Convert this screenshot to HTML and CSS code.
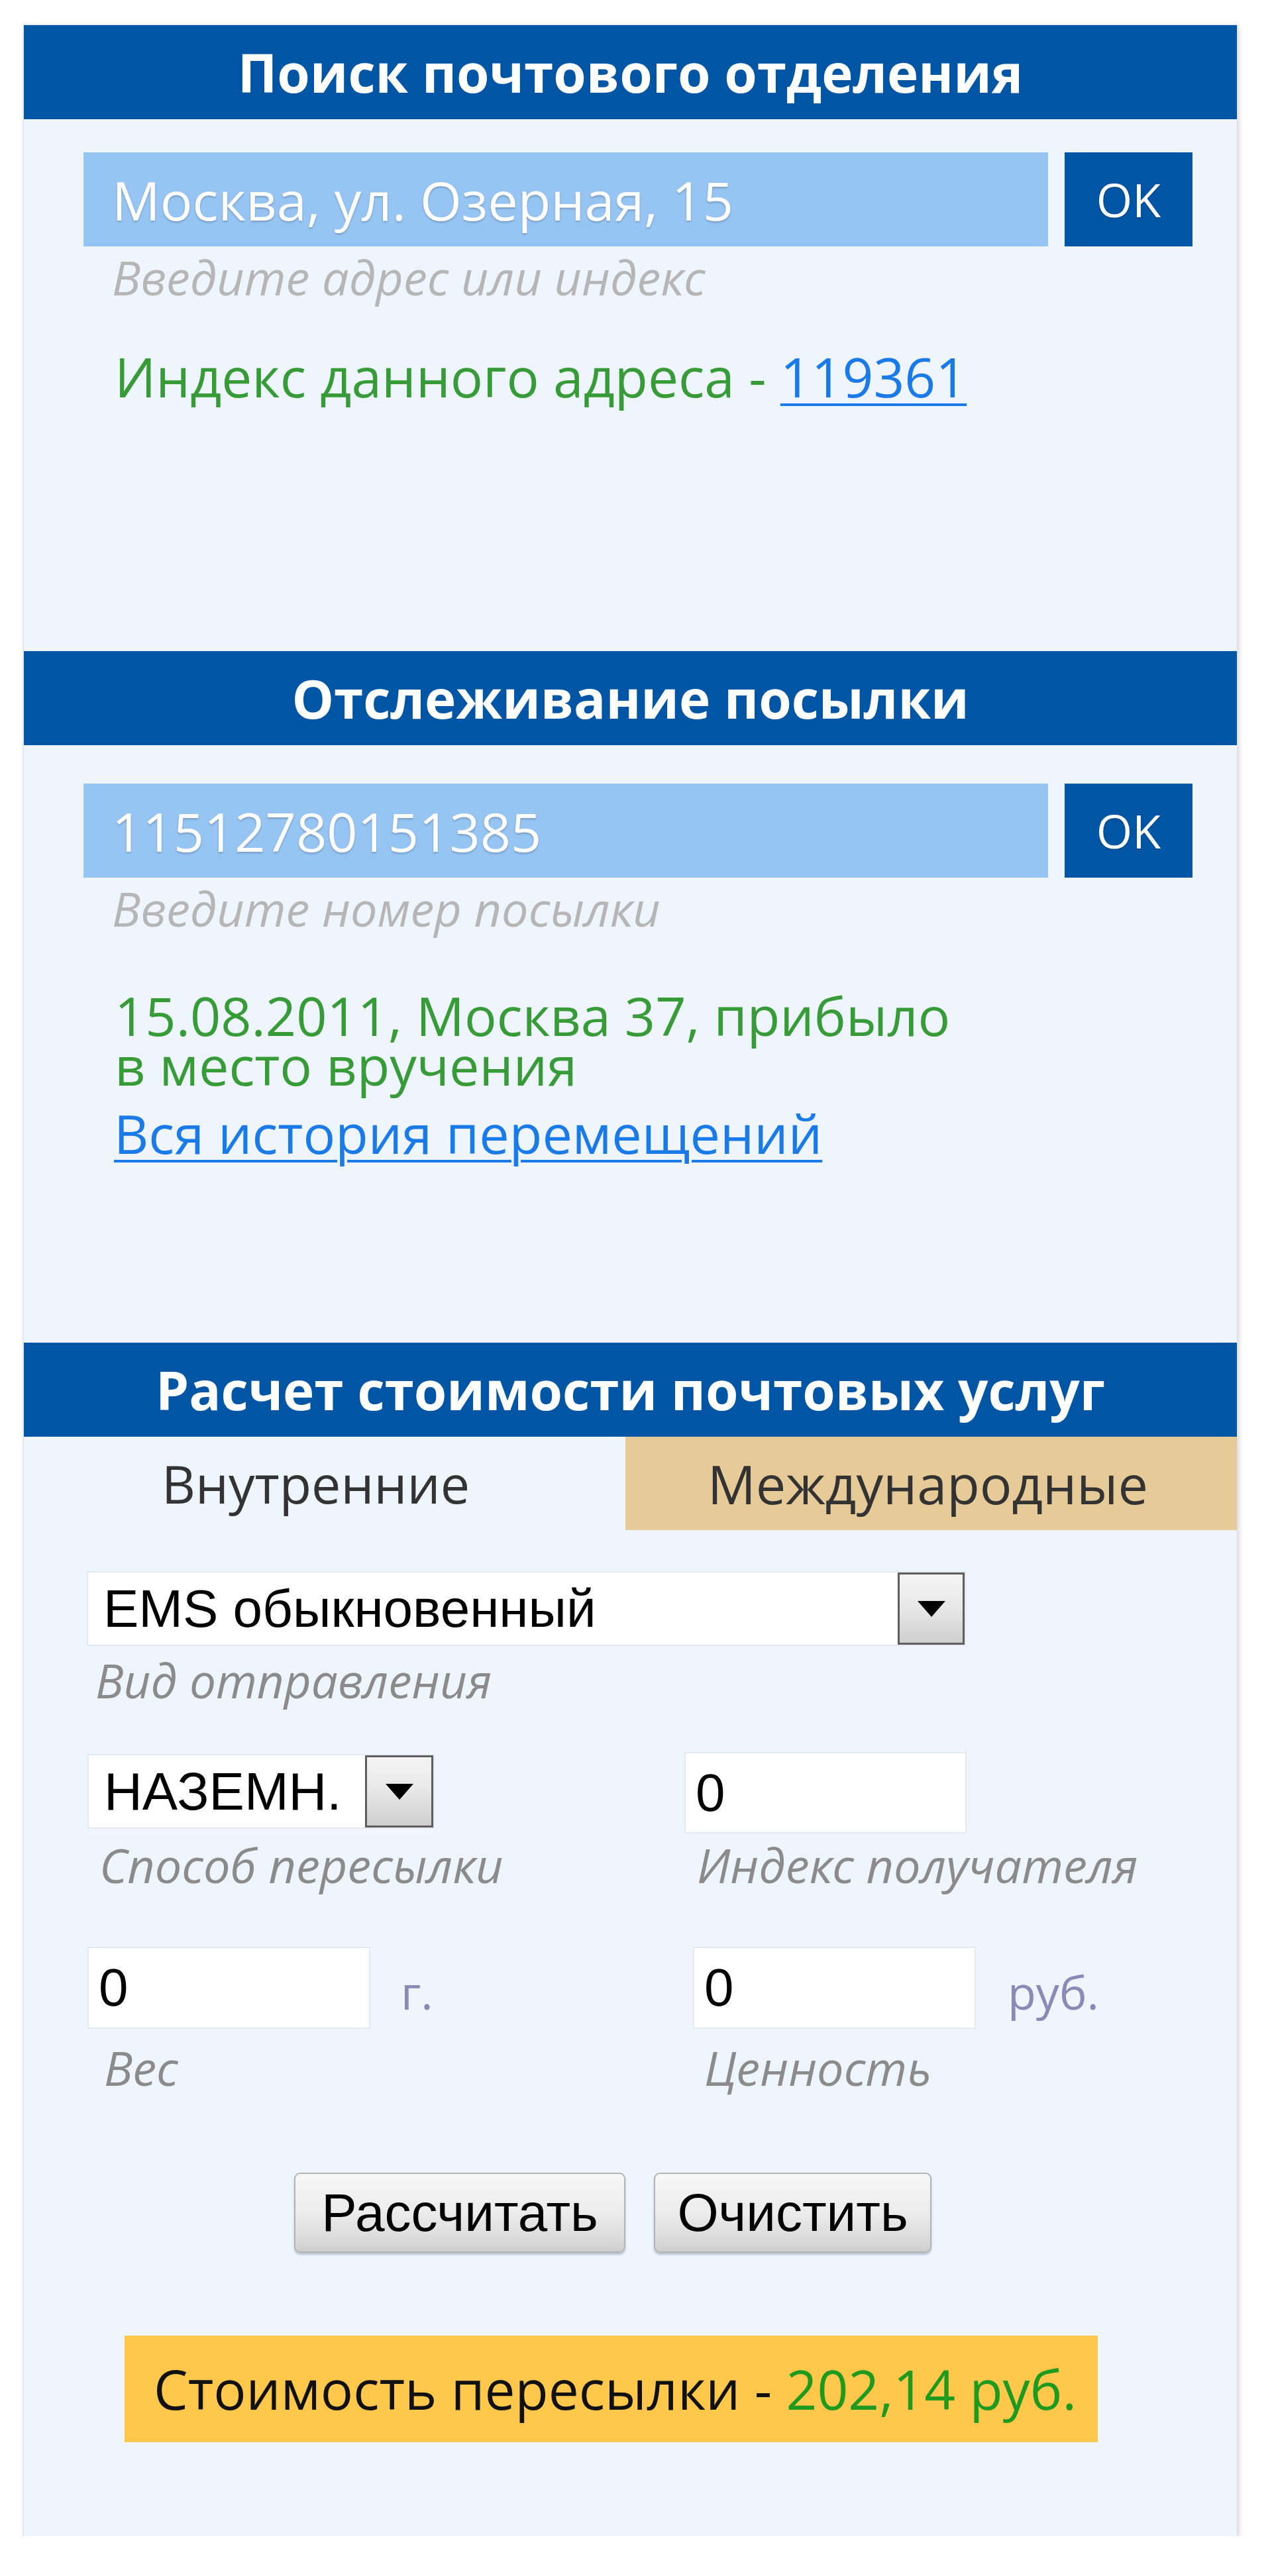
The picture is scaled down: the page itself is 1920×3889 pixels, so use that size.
FILE: index.html
```html
<!DOCTYPE html>
<html lang="ru">
<head>
<meta charset="utf-8">
<title>Почтовые сервисы</title>
<link rel="stylesheet" href="styles.css">
</head>
<body>
<div class="panel">

  <section class="block block-search">
    <h2 class="block-title">Поиск почтового отделения</h2>
    <div class="block-body body-search">
      <div class="search-row">
        <input class="search-input" type="text" value="Москва, ул. Озерная, 15">
        <button class="ok-btn" type="button">OK</button>
      </div>
      <div class="hint">Введите адрес или индекс</div>
      <div class="result result-index">Индекс данного адреса - <a class="link" href="#">119361</a></div>
    </div>
  </section>

  <section class="block block-track">
    <h2 class="block-title">Отслеживание посылки</h2>
    <div class="block-body body-track">
      <div class="search-row">
        <input class="search-input" type="text" value="11512780151385">
        <button class="ok-btn" type="button">OK</button>
      </div>
      <div class="hint">Введите номер посылки</div>
      <div class="result result-status">
        <div class="status-line">15.08.2011, Москва 37, прибыло</div>
        <div class="status-line">в место вручения</div>
      </div>
      <a class="link history" href="#">Вся история перемещений</a>
    </div>
  </section>

  <section class="block block-calc">
    <h2 class="block-title">Расчет стоимости почтовых услуг</h2>
    <div class="tabs">
      <div class="tab tab-active">Внутренние</div>
      <div class="tab tab-inactive">Международные</div>
    </div>
    <div class="calc-body">
      <div class="select select-wide">
        <span class="select-value">EMS обыкновенный</span>
        <span class="select-arrow"><svg width="42" height="24" viewBox="0 0 42 24"><path d="M0 0H42L21 24Z" fill="#000"/></svg></span>
      </div>
      <div class="label label-kind">Вид отправления</div>

      <div class="grid">
        <div class="cell cell-method">
          <div class="select select-small">
            <span class="select-value">НАЗЕМН.</span>
            <span class="select-arrow"><svg width="42" height="24" viewBox="0 0 42 24"><path d="M0 0H42L21 24Z" fill="#000"/></svg></span>
          </div>
        </div>
        <div class="cell cell-index">
          <input class="field field-index" type="text" value="0">
        </div>
        <div class="label label-method">Способ пересылки</div>
        <div class="label label-index">Индекс получателя</div>

        <div class="cell cell-weight">
          <input class="field" type="text" value="0">
          <span class="unit unit-g">г.</span>
        </div>
        <div class="cell cell-value">
          <input class="field" type="text" value="0">
          <span class="unit unit-rub">руб.</span>
        </div>
        <div class="label label-weight">Вес</div>
        <div class="label label-value">Ценность</div>
      </div>

      <div class="actions">
        <button class="btn btn-calc" type="button">Рассчитать</button>
        <button class="btn btn-clear" type="button">Очистить</button>
      </div>

      <div class="cost">Стоимость пересылки - <span class="cost-sum">202,14 руб.</span></div>
    </div>
  </section>

</div>
</body>
</html>
```
FILE: styles.css
```css
* { box-sizing: border-box; }

html, body {
  margin: 0;
  padding: 0;
  background: #ffffff;
}

body {
  font-family: "Open Sans", "Noto Sans", sans-serif;
}

.panel {
  width: 1831px;
  margin: 38px 0 0 36px;
  padding-bottom: 142px;
  background: #eef5fd;
  box-shadow: 0 0 0 1px #d3e0ee, 2px 3px 9px rgba(0, 0, 0, 0.2);
}

.block-title {
  margin: 0;
  height: 142px;
  background: #0055a5;
  color: #ffffff;
  font-family: "Open Sans", "Noto Sans", sans-serif;
  font-weight: 700;
  font-size: 80px;
  line-height: 142px;
  text-align: center;
  white-space: nowrap;
}

.block-body {
  padding: 0 67px 0 90px;
}

.body-search {
  padding-top: 50px;
  height: 803px;
}

.body-track {
  padding-top: 58px;
  height: 902px;
}

.search-row {
  display: flex;
  gap: 25px;
  height: 142px;
}

.search-input {
  flex: 1;
  min-width: 0;
  height: 142px;
  margin: 0;
  border: 0;
  outline: none;
  padding: 0 0 0 43px;
  background: #96c5f4;
  color: #ffffff;
  font-family: "Open Sans", "Noto Sans", sans-serif;
  font-size: 81px;
  text-shadow: 0 2px 3px rgba(0, 0, 0, 0.22);
}

.ok-btn {
  width: 193px;
  height: 142px;
  margin: 0;
  padding: 0;
  border: 0;
  background: #0055a5;
  color: #ffffff;
  font-family: "Open Sans", "Noto Sans", sans-serif;
  font-size: 70px;
  text-shadow: 0 1px 2px rgba(0, 0, 0, 0.3);
}

.hint {
  margin-top: 6px;
  padding-left: 43px;
  font-style: italic;
  font-size: 72px;
  line-height: 80px;
  color: #b6b6b6;
  white-space: nowrap;
}

.result {
  padding-left: 47px;
  color: #379b37;
  white-space: nowrap;
}

.result-index {
  margin-top: 70px;
  font-size: 82px;
  line-height: 80px;
}

.result-status {
  margin-top: 84px;
  font-size: 81px;
  line-height: 75px;
}

.status-line {
  height: 75px;
}

.link {
  color: #1a7be8;
  text-decoration: underline;
  text-decoration-thickness: 4px;
  text-underline-offset: 9px;
}

.history {
  display: block;
  margin-top: 28px;
  padding-left: 46px;
  font-size: 81px;
  line-height: 75px;
  white-space: nowrap;
}

/* tabs */
.tabs {
  display: flex;
  height: 141px;
}

.tab {
  line-height: 141px;
  color: #333333;
  text-align: center;
  white-space: nowrap;
}

.tab-active {
  width: 908px;
  padding-right: 27px;
  font-size: 79px;
}

.tab-inactive {
  flex: 1;
  padding-right: 10px;
  background: #e6ca97;
  font-size: 81px;
}

/* calculator form */
.calc-body {
  padding: 62px 0 0 95px;
}

.select {
  display: flex;
  background: #ffffff;
  border: 2px solid #e3eaf2;
}

.select-value {
  flex: 1;
  padding-left: 23px;
  font-family: "Liberation Sans", Arial, sans-serif;
  font-size: 80px;
  color: #000000;
  display: flex;
  align-items: center;
  white-space: nowrap;
}

.select-arrow {
  width: 101px;
  display: flex;
  align-items: center;
  justify-content: center;
  border: 3px solid #5e5e5e;
  background: linear-gradient(#f4f4f4 0%, #e9e9e9 45%, #cfcfcf 100%);
}

.select-arrow svg {
  display: block;
}

.select-wide {
  width: 1327px;
  height: 113px;
}

.select-small {
  width: 524px;
  height: 113px;
  margin-top: 3px;
}

.select-small .select-arrow {
  width: 103px;
}

.label {
  font-style: italic;
  font-size: 72px;
  line-height: 80px;
  color: #8b8b8b;
  white-space: nowrap;
}

.label-kind {
  margin-top: 12px;
  padding-left: 13px;
  font-size: 71px;
}

.grid {
  display: grid;
  grid-template-columns: 902px auto;
  margin-top: 68px;
}

.cell {
  display: flex;
  align-items: flex-start;
}

.cell-method { padding-left: 1px; }

.field {
  width: 427px;
  height: 124px;
  margin: 0;
  padding: 0 0 0 15px;
  border: 2px solid #e3eaf2;
  outline: none;
  background: #ffffff;
  color: #000000;
  font-family: "Liberation Sans", Arial, sans-serif;
  font-size: 80px;
}

.field-index {
  width: 426px;
  height: 123px;
}

.label-method,
.label-index {
  margin-top: 7px;
  padding-left: 19px;
}

.cell-weight,
.cell-value {
  margin-top: 84px;
}

.cell-weight { padding-left: 1px; }
.cell-value { padding-left: 13px; }

.unit {
  margin-top: 33px;
  font-size: 70px;
  line-height: 70px;
  color: #8a8ab6;
}

.unit-g { margin-left: 46px; }
.unit-rub { margin-left: 48px; }

.label-weight {
  margin-top: 18px;
  padding-left: 26px;
}

.label-value {
  margin-top: 18px;
  padding-left: 30px;
}

.actions {
  display: flex;
  gap: 43px;
  margin-top: 119px;
  padding-left: 313px;
}

.btn {
  height: 121px;
  margin: 0;
  padding: 0;
  border: 2px solid #b4b4b4;
  border-radius: 9px;
  background: linear-gradient(#f7f7f7 0%, #ececec 50%, #dadada 85%, #cfcfcf 100%);
  box-shadow: 0 3px 3px rgba(90, 100, 130, 0.35);
  font-family: "Liberation Sans", Arial, sans-serif;
  font-size: 80px;
  color: #000000;
  white-space: nowrap;
}

.btn-calc { width: 500px; }
.btn-clear { width: 419px; }

.cost {
  width: 1469px;
  height: 161px;
  margin: 125px 0 0 57px;
  padding-left: 44px;
  background: #ffc84b;
  color: #111111;
  font-size: 82px;
  line-height: 161px;
  white-space: nowrap;
}

.cost-sum {
  color: #1e9b1e;
}
```
